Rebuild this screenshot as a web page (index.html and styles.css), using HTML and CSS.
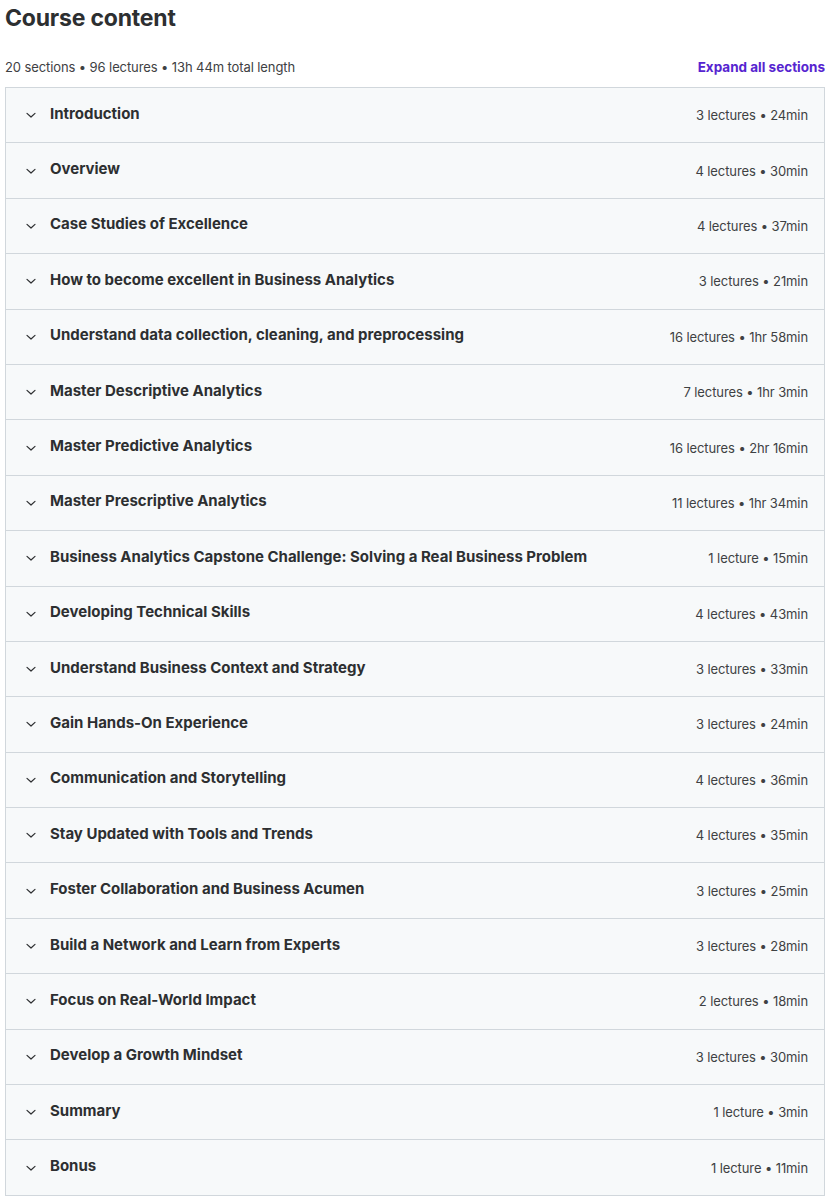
FILE: index.html
```html
<!DOCTYPE html>
<html lang="en">
<head>
    <meta charset="UTF-8">
    <title>Course content</title>
    <link rel="stylesheet" href="styles.css">
</head>
<body>
    <div class="curriculum">
        <h2 class="title">Course content</h2>
        <div class="summary">
            <span class="stats">20 sections • 96 lectures • 13h 44m total length</span>
            <button class="expand">Expand all sections</button>
        </div>
        <div class="sections" id="sections"></div>
    </div>

    <script>
        const sections = [
            ['Introduction', '3 lectures • 24min'],
            ['Overview', '4 lectures • 30min'],
            ['Case Studies of Excellence', '4 lectures • 37min'],
            ['How to become excellent in Business Analytics', '3 lectures • 21min'],
            ['Understand data collection, cleaning, and preprocessing', '16 lectures • 1hr 58min'],
            ['Master Descriptive Analytics', '7 lectures • 1hr 3min'],
            ['Master Predictive Analytics', '16 lectures • 2hr 16min'],
            ['Master Prescriptive Analytics', '11 lectures • 1hr 34min'],
            ['Business Analytics Capstone Challenge: Solving a Real Business Problem', '1 lecture • 15min'],
            ['Developing Technical Skills', '4 lectures • 43min'],
            ['Understand Business Context and Strategy', '3 lectures • 33min'],
            ['Gain Hands-On Experience', '3 lectures • 24min'],
            ['Communication and Storytelling', '4 lectures • 36min'],
            ['Stay Updated with Tools and Trends', '4 lectures • 35min'],
            ['Foster Collaboration and Business Acumen', '3 lectures • 25min'],
            ['Build a Network and Learn from Experts', '3 lectures • 28min'],
            ['Focus on Real-World Impact', '2 lectures • 18min'],
            ['Develop a Growth Mindset', '3 lectures • 30min'],
            ['Summary', '1 lecture • 3min'],
            ['Bonus', '1 lecture • 11min']
        ];

        const chevron = '<svg class="chevron" viewBox="0 0 24 24" width="16" height="16"><path d="M6 9.5l6 5.5 6-5.5" fill="none" stroke="currentColor" stroke-width="1.8" stroke-linecap="round" stroke-linejoin="round"/></svg>';

        const list = document.getElementById('sections');
        sections.forEach(([name, info]) => {
            const row = document.createElement('div');
            row.className = 'section';
            row.innerHTML = chevron +
                '<span class="section-name">' + name + '</span>' +
                '<span class="section-info">' + info + '</span>';
            list.appendChild(row);
        });
    </script>
</body>
</html>
```

FILE: styles.css
```css
body {
    margin: 0;
    padding: 0 0 0 5px;
    font-family: 'Inter', 'Liberation Sans', sans-serif;
    color: #2d2f31;
    background-color: #ffffff;
}
.curriculum {
    width: 820px;
}
.title {
    font-size: 23px;
    font-weight: 700;
    margin: 0;
    padding-top: 3px;
    line-height: 30px;
    letter-spacing: -0.2px;
}
.summary {
    display: flex;
    justify-content: space-between;
    align-items: center;
    margin-top: 26px;
    margin-bottom: 12px;
    font-size: 13px;
}
.stats {
    color: #3e4143;
    letter-spacing: -0.1px;
}
.expand {
    background: none;
    border: none;
    padding: 0;
    font-family: inherit;
    font-size: 13.5px;
    font-weight: 700;
    color: #5624d0;
    cursor: pointer;
}
.sections {
    border: 1px solid #d1d7dc;
    border-bottom: none;
}
.section {
    display: flex;
    align-items: center;
    background-color: #f7f9fa;
    border-bottom: 1px solid #d1d7dc;
    padding: 16px 16px 16px 17px;
    height: 22.4px;
}
.chevron {
    color: #2d2f31;
    margin-right: 11px;
    flex-shrink: 0;
}
.section-name {
    font-size: 15px;
    font-weight: 700;
    flex: 1;
    margin-top: -4px;
}
.section-info {
    font-size: 13px;
    color: #3e4143;
    letter-spacing: -0.1px;
}
```
